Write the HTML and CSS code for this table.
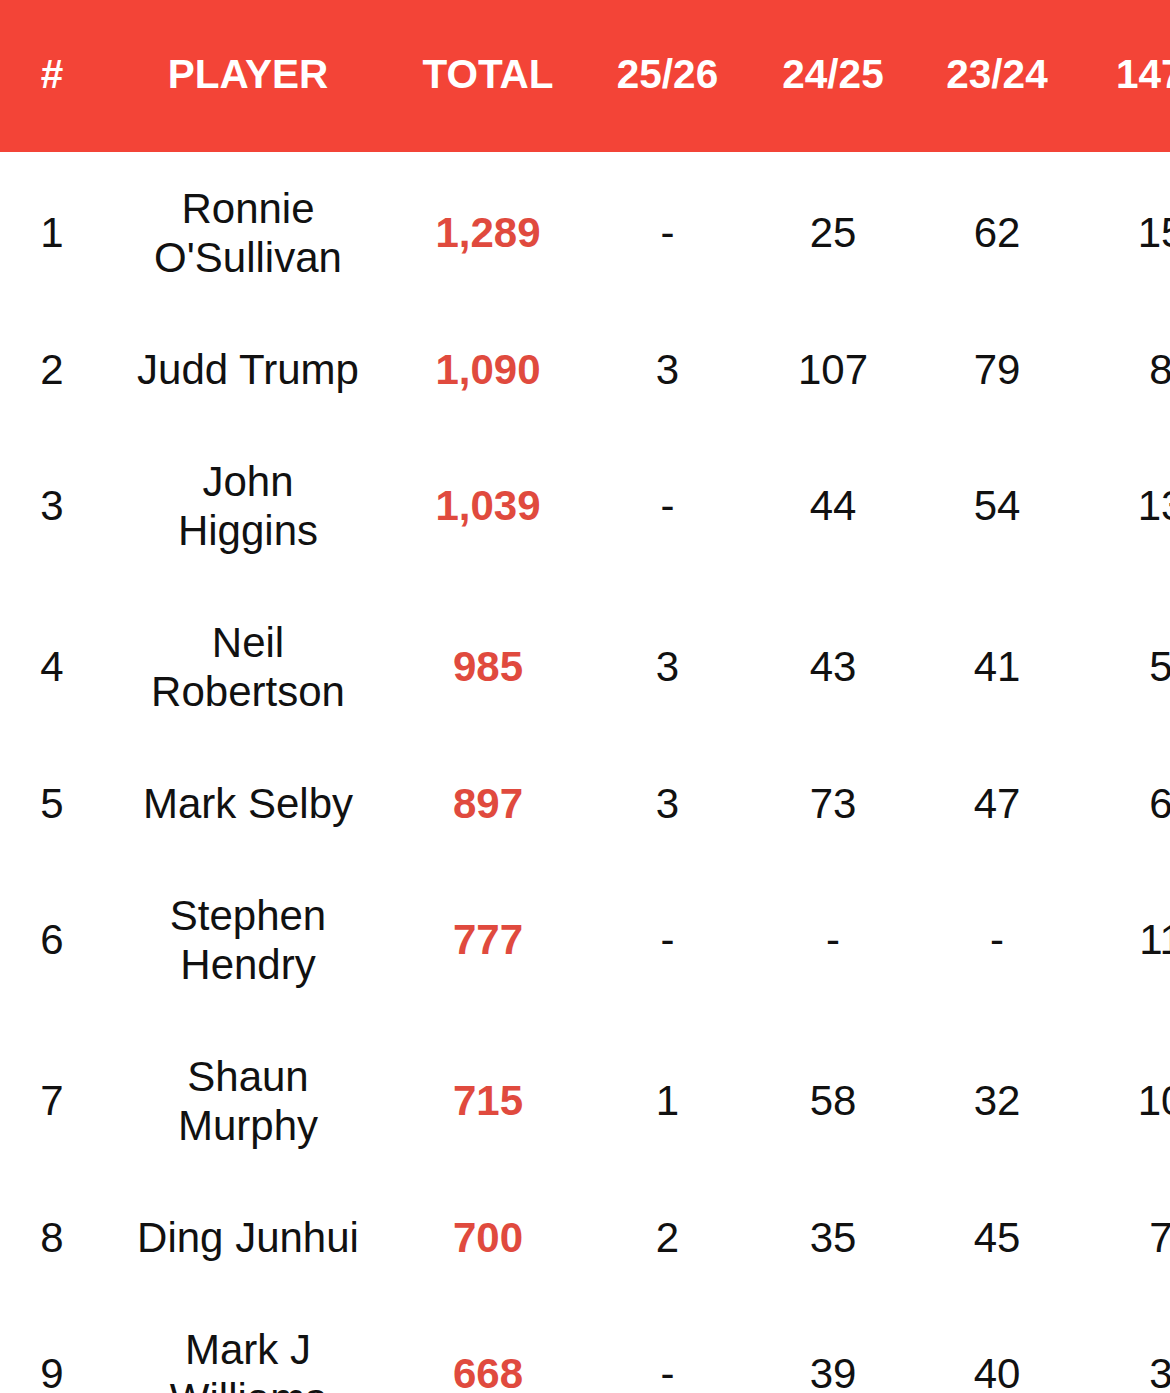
FILE: index.html
```html
<!DOCTYPE html>
<html lang="en">
<head>
<meta charset="utf-8">
<title>Century breaks</title>
<link rel="stylesheet" href="styles.css">
</head>
<body>
<div class="wrap">
<table class="board">
  <colgroup>
    <col class="c-rank"><col class="c-player"><col class="c-total"><col class="c-s1"><col class="c-s"><col class="c-s"><col class="c-s">
  </colgroup>
  <thead>
    <tr><th>#</th><th>PLAYER</th><th>TOTAL</th><th>25/26</th><th>24/25</th><th>23/24</th><th>147s</th></tr>
  </thead>
  <tbody>
    <tr><td>1</td><td class="name">Ronnie O'Sullivan</td><td class="total">1,289</td><td>-</td><td>25</td><td>62</td><td>15</td></tr>
    <tr><td>2</td><td class="name">Judd Trump</td><td class="total">1,090</td><td>3</td><td>107</td><td>79</td><td>8</td></tr>
    <tr><td>3</td><td class="name">John Higgins</td><td class="total">1,039</td><td>-</td><td>44</td><td>54</td><td>13</td></tr>
    <tr><td>4</td><td class="name">Neil Robertson</td><td class="total">985</td><td>3</td><td>43</td><td>41</td><td>5</td></tr>
    <tr><td>5</td><td class="name">Mark Selby</td><td class="total">897</td><td>3</td><td>73</td><td>47</td><td>6</td></tr>
    <tr><td>6</td><td class="name">Stephen Hendry</td><td class="total">777</td><td>-</td><td>-</td><td>-</td><td>11</td></tr>
    <tr><td>7</td><td class="name">Shaun Murphy</td><td class="total">715</td><td>1</td><td>58</td><td>32</td><td>10</td></tr>
    <tr><td>8</td><td class="name">Ding Junhui</td><td class="total">700</td><td>2</td><td>35</td><td>45</td><td>7</td></tr>
    <tr><td>9</td><td class="name">Mark J Williams</td><td class="total">668</td><td>-</td><td>39</td><td>40</td><td>3</td></tr>
  </tbody>
</table>
</div>
</body>
</html>
```
FILE: styles.css
```css
html, body {
  margin: 0;
  padding: 0;
  background: #ffffff;
}
body {
  width: 1170px;
  height: 1393px;
  overflow: hidden;
  font-family: "Liberation Sans", Arial, sans-serif;
  color: #111111;
}
.wrap {
  width: 1170px;
  overflow: hidden;
}
.board {
  border-collapse: collapse;
  table-layout: fixed;
  width: 1243px;
}
.c-rank { width: 104px; }
.c-player { width: 288px; }
.c-total { width: 192px; }
.c-s1 { width: 167px; }
.c-s { width: 164px; }

.board thead th {
  background: #f34437;
  color: #ffffff;
  font-weight: bold;
  font-size: 40.5px;
  height: 148px;
  padding: 0 0 4px;
  text-align: center;
  vertical-align: middle;
  line-height: 1;
  white-space: nowrap;
}
.board tbody td {
  font-size: 42px;
  line-height: 49px;
  padding: 31.5px 0;
  text-align: center;
  vertical-align: middle;
}
.board tbody td.name {
  padding-left: 30px;
  padding-right: 30px;
}
.board tbody td.total {
  color: #e04a3e;
  font-weight: bold;
}
```
